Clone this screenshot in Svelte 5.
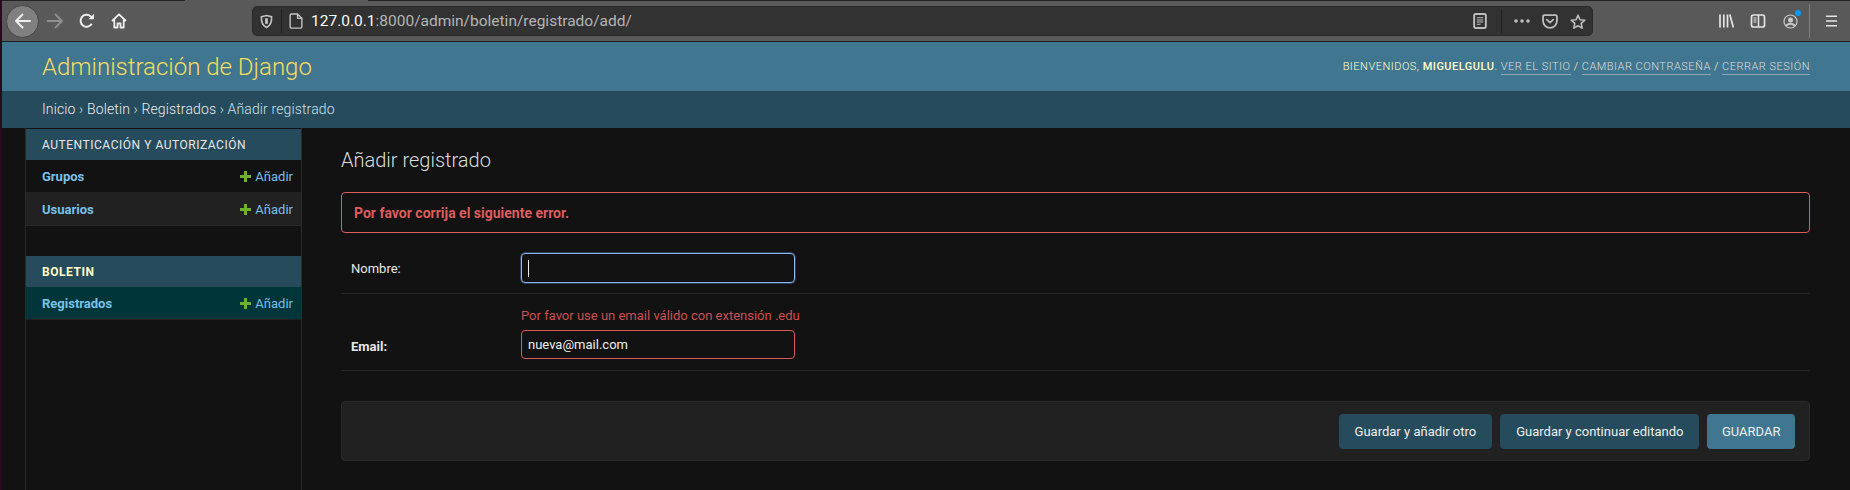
<script>
  const modules = [
    { title: 'Autenticación y autorización', rows: ['Grupos', 'Usuarios'] },
    { title: 'Boletin', strong: true, rows: ['Registrados'], current: true }
  ];
</script>

<div class="window">
  <div class="topline"><span class="d1"></span><span class="d2"></span><span class="d3"></span></div>
  <div class="toolbar">
    <div class="backbtn">
      <svg width="18" height="18" viewBox="0 0 18 18" fill="none" stroke="#eee" stroke-width="2" stroke-linecap="round" stroke-linejoin="round"><path d="M16 9H2M8.500 2.500 2 9l6.500 6.500"/></svg>
    </div>
    <svg class="fwd" width="18" height="18" viewBox="0 0 18 18" fill="none" stroke="#8f8f8f" stroke-width="1.800" stroke-linecap="round" stroke-linejoin="round"><path d="M1.500 9h14.500M9.500 2.500l6.500 6.500-6.500 6.500"/></svg>
    <svg class="reload" width="16" height="16" viewBox="0 0 16 16" fill="none" stroke="#eee" stroke-width="2"><path d="M12.800 10.800A6 6 0 1 1 11.500 3.200L14 5"/><path d="M15 .8V6.300H9.500" fill="#eee" stroke="none"/></svg>
    <svg class="home" width="16" height="16" viewBox="0 0 16 16" fill="none" stroke="#eee" stroke-width="1.800" stroke-linejoin="round"><path d="M1 8 8 1.300 15 8M3.300 6.500V14.500H6.500V10.500H9.500V14.500H12.700V6.500"/></svg>
    <div class="urlbar">
      <svg class="shield" width="13" height="15" viewBox="0 0 14 15" fill="none" stroke="#c4c4c4" stroke-width="1.700"><path d="M1.500 2.300 7 1l5.500 1.300c.3 5.500-1.300 9.500-5.500 11.700C2.800 11.800 1.200 7.800 1.500 2.300Z"/><path d="M7 4v6" stroke-width="3"/></svg>
      <span class="sep"></span>
      <svg class="page" width="14" height="16" viewBox="0 0 13 15" fill="none" stroke="#c4c4c4" stroke-width="1.300" stroke-linejoin="round"><path d="M1 2.300Q1 1 2.300 1H8l4 4v8a1.200 1.200 0 0 1-1.200 1.200H2.300A1.300 1.300 0 0 1 1 13ZM8 1V5H12"/></svg>
      <span class="url"><b>127.0.0.1</b><i>:8000/admin/boletin/registrado/add/</i></span>
      <span class="grow"></span>
      <svg class="reader" width="14" height="16" viewBox="0 0 13 15" fill="none" stroke="#bdbdbd"><rect x="1" y="1" width="11" height="13" rx="1.500" stroke-width="1.800"/><path d="M3.500 4.500h6M3.500 6.500h6M3.500 8.500h6M3.500 10.500h3.500" stroke-width="1"/></svg>
      <span class="sep sep2"></span>
      <svg class="dots" width="16" height="4" viewBox="0 0 16 4" fill="#bdbdbd"><circle cx="2" cy="2" r="1.800"/><circle cx="8" cy="2" r="1.800"/><circle cx="14" cy="2" r="1.800"/></svg>
      <svg class="pocket" width="16" height="15" viewBox="0 0 15 14" fill="none" stroke="#bdbdbd" stroke-width="1.700" stroke-linecap="round" stroke-linejoin="round"><path d="M1 2.300Q1 1 2.300 1H12.700Q14 1 14 2.300V6.500A6.500 6.500 0 0 1 1 6.500Z"/><path d="M4.500 5.300 7.500 8l3-2.700"/></svg>
      <svg class="star" width="16" height="15" viewBox="0 0 16 15" fill="none" stroke="#bdbdbd" stroke-width="1.600" stroke-linejoin="round"><path d="M8 1.200 10 5.700l4.800.5-3.600 3.200 1 4.700L8 11.700l-4.200 2.400 1-4.700L1.200 6.200 6 5.700Z"/></svg>
    </div>
    <span class="grow"></span>
    <svg class="lib" width="15" height="14" viewBox="0 0 15 14" stroke="#e4e4e4" stroke-width="1.700" fill="none"><path d="M1 .5v13M4.800 .5v13M8.500 .5v13M10.800 .5l3.600 13"/></svg>
    <svg class="side" width="16" height="14" viewBox="0 0 15 14" fill="none" stroke="#e4e4e4"><rect x="1" y="1" width="13" height="12" rx="2" stroke-width="1.700"/><path d="M8 1v12" stroke-width="1.500"/><path d="M3 4h3M3 6h3M3 8h3" stroke-width="1"/></svg>
    <div class="acct">
      <svg width="15" height="15" viewBox="0 0 15 15" fill="none" stroke="#c9c9c9"><circle cx="7.500" cy="7.500" r="6.500" stroke-width="1.200"/><circle cx="7.500" cy="6" r="2.500" fill="#c9c9c9" stroke="none"/><path d="M3 11.500q4.500-3.500 9 0" stroke-width="1.800"/></svg>
      <span class="dot"></span>
    </div>
    <span class="vsep"></span>
    <svg class="menu" width="13" height="12" viewBox="0 0 13 12" stroke="#e4e4e4" stroke-width="1.500"><path d="M1 1.200h11M1 6h11M1 10.800h11"/></svg>
  </div>

  <header class="head">
    <h1 class="brand">Administración de Django</h1>
    <div class="tools">
      BIENVENIDOS, <strong>MIGUELGULU</strong>. <a href="#a">VER EL SITIO</a> / <a href="#b">CAMBIAR CONTRASEÑA</a> / <a href="#c">CERRAR SESIÓN</a>
    </div>
  </header>
  <nav class="crumbs">
    <div><span class="c">Inicio</span> › <span class="c">Boletin</span> › <span class="c">Registrados</span> › Añadir registrado</div>
  </nav>

  <div class="main">
    <aside class="sidebar">
      {#each modules as m}
        <section class="module">
          <h2 class:strong={m.strong}>{m.title}</h2>
          {#each m.rows as r, i}
            <div class="row" class:alt={i === 1} class:current={m.current}>
              <span class="name">{r}</span>
              <span class="add"><svg width="11" height="11" viewBox="0 0 11 11"><path d="M4 0h3v4h4v3H7v4H4V7H0V4h4Z" fill="#6fb02f"/></svg>Añadir</span>
            </div>
          {/each}
        </section>
      {/each}
    </aside>

    <main class="content">
      <h1 class="title">Añadir registrado</h1>
      <p class="errornote">Por favor corrija el siguiente error.</p>
      <div class="form-row one">
        <label for="n">Nombre:</label>
        <div class="fake focus" id="n"><span class="caret"></span></div>
      </div>
      <div class="form-row two">
        <label for="e" class="req">Email:</label>
        <div class="fieldcol">
          <div class="errmsg">Por favor use un email válido con extensión .edu</div>
          <div class="fake err" id="e">nueva@mail.com</div>
        </div>
      </div>
      <div class="submit">
        <button class="btn">Guardar y añadir otro</button>
        <button class="btn">Guardar y continuar editando</button>
        <button class="btn primary">GUARDAR</button>
      </div>
    </main>
  </div>
</div>

<style>
  :global(body) { margin: 0; background: #121212; overflow: hidden; }
  .window {
    width: 1850px; height: 490px; box-sizing: border-box; padding-left: 2px;
    background: linear-gradient(#2a0a1f, #2a0a1f) left / 2px 100% no-repeat, #121212;
    font-family: Roboto, sans-serif; color: #eee; font-size: 14px; overflow: hidden;
    display: flex; flex-direction: column;
  }
  .topline { display: flex; height: 1px; flex: none; }
  .d1 { width: 183px; background: #232323; }
  .d2 { width: 183px; background: #5a5a5a; }
  .d3 { flex: 1; background: #232323; }

  .toolbar {
    height: 40px; flex: none; background: #595959; border-bottom: 1px solid #1e1e1e;
    display: flex; align-items: center;
  }
  .backbtn {
    width: 33px; height: 33px; box-sizing: border-box; margin-left: 4px; border-radius: 50%; background: #808080;
    border: 1px solid #474747; display: flex; align-items: center; justify-content: center; flex: none;
  }
  .fwd { margin-left: 7px; }
  .reload { margin-left: 15px; }
  .home { margin-left: 16px; }
  .urlbar {
    margin-left: 125px; width: 1341px; height: 30px; box-sizing: border-box; background: #323232;
    border: 1px solid #2a2a2a; border-radius: 5px; display: flex; align-items: center; flex: none;
  }
  .shield { margin-left: 7px; }
  .sep { width: 1px; height: 24px; background: #222; margin-left: 8px; }
  .page { margin-left: 7px; }
  .url { margin-left: 8px; font-size: 15.500px; white-space: nowrap; }
  .url b { font-weight: 400; color: #fbfbfb; }
  .url i { font-style: normal; color: #b5b5b5; }
  .grow { flex: 1; }
  .sep2 { margin-left: 14px; }
  .dots { margin-left: 12px; }
  .pocket { margin-left: 12px; }
  .star { margin-left: 12px; margin-right: 6px; }
  .lib { margin-right: 16px; }
  .side { margin-right: 17px; }
  .acct { position: relative; width: 15px; height: 15px; margin-right: 11px; }
  .acct svg { display: block; }
  .dot { position: absolute; right: -3px; top: -4px; width: 6px; height: 6px; border-radius: 50%; background: #0a9bf0; }
  .vsep { width: 1px; height: 34px; background: #7d7d7d; margin-right: 15px; }
  .menu { margin-right: 12px; }

  .head {
    height: 49px; flex: none; background: #417690; display: flex; align-items: center;
    justify-content: space-between; padding: 0 40px 0 40px;
  }
  .brand { margin: 0; font-size: 24px; font-weight: 300; color: #f5dd5d; }
  .tools { font-size: 11px; font-weight: 300; letter-spacing: .5px; color: #ffc; white-space: nowrap; }
  .tools strong { font-weight: 500; }
  .tools a { color: #ddd; text-decoration: none; border-bottom: 1px solid #8aa6b5; padding-bottom: 1px; }

  .crumbs {
    height: 37px; flex: none; box-sizing: border-box; background: #264b5d; padding: 0 0 2px 40px;
    display: flex; align-items: center; font-size: 14px; font-weight: 300; color: #c8e0ee; letter-spacing: .13px;
  }
  .c { color: #eaeaea; }

  .main { flex: 1; display: flex; min-height: 0; }
  .sidebar {
    width: 275px; flex: none; margin-left: 23px; padding-top: 1px; box-sizing: content-box;
    border-left: 1px solid #2a2a2a; border-right: 1px solid #2a2a2a;
  }
  .module { margin-bottom: 30px; }
  .module h2 {
    margin: 0; height: 31px; box-sizing: border-box; background: #264b5d; padding-left: 16px;
    display: flex; align-items: center; font-size: 12px; font-weight: 400; letter-spacing: .53px;
    text-transform: uppercase; color: #e6e6e6;
  }
  .module h2.strong { font-weight: 700; color: #ffc; }
  .row {
    height: 33px; box-sizing: border-box; padding: 0 8px 0 16px; display: flex; align-items: center;
    justify-content: space-between; border-bottom: 1px solid #222; font-size: 13px;
  }
  .row.alt { background: #212121; border-bottom-color: #2a2a2a; }
  .row.current { background: #00363a; }
  .name { font-weight: 700; color: #79c2e8; }
  .add { color: #79bfe6; font-weight: 400; display: flex; align-items: center; gap: 4px; }

  .content { flex: 1; min-width: 0; padding: 0 40px 0 39px; }
  .title { margin: 20px 0 0; font-size: 20px; font-weight: 300; color: #ddd; line-height: 24px; height: 24px; }
  .errornote {
    margin: 20px 0 0; height: 41px; box-sizing: border-box; border: 1px solid #dc5b5b; border-radius: 4px;
    color: #df5c5c; font-weight: 700; font-size: 14px; padding-left: 12px; display: flex; align-items: center;
  }
  .form-row { display: flex; border-bottom: 1px solid #272727; box-sizing: border-box; padding-left: 10px; }
  .form-row label { width: 170px; font-size: 13px; color: #e8e8e8; flex: none; }
  .one { height: 61px; align-items: center; padding-top: 10px; }
  .two { height: 77px; align-items: flex-end; padding-bottom: 11px; }
  .req { font-weight: 700; padding-bottom: 5px; }
  .fieldcol { display: flex; flex-direction: column; }
  .errmsg { font-size: 13px; color: #cb5050; margin-bottom: 7px; }
  .fake {
    width: 274px; height: 29px; box-sizing: border-box; border: 1px solid #444; border-radius: 4px;
    font-size: 13px; padding-left: 6px; display: flex; align-items: center; color: #eee;
  }
  .fake.focus { height: 30px; border: 1.500px solid #8ab8ee; box-shadow: 0 0 0 .5px #3d6fa8; }
  .fake.err { border-color: #d65a5a; }
  .caret { width: 1px; height: 17px; background: #eee; }

  .submit {
    margin-top: 30px; height: 60px; box-sizing: border-box; background: #212121; border: 1px solid #2a2a2a;
    border-radius: 4px; display: flex; justify-content: flex-end; align-items: center; gap: 8px; padding-right: 14px;
  }
  .btn {
    height: 35px; border: 0; border-radius: 4px; background: #264b5d; color: #eee; font: 400 13px Roboto, sans-serif;
    padding: 0 16px;
  }
  .btn.primary { background: #417690; padding: 0 14.500px; }
</style>
